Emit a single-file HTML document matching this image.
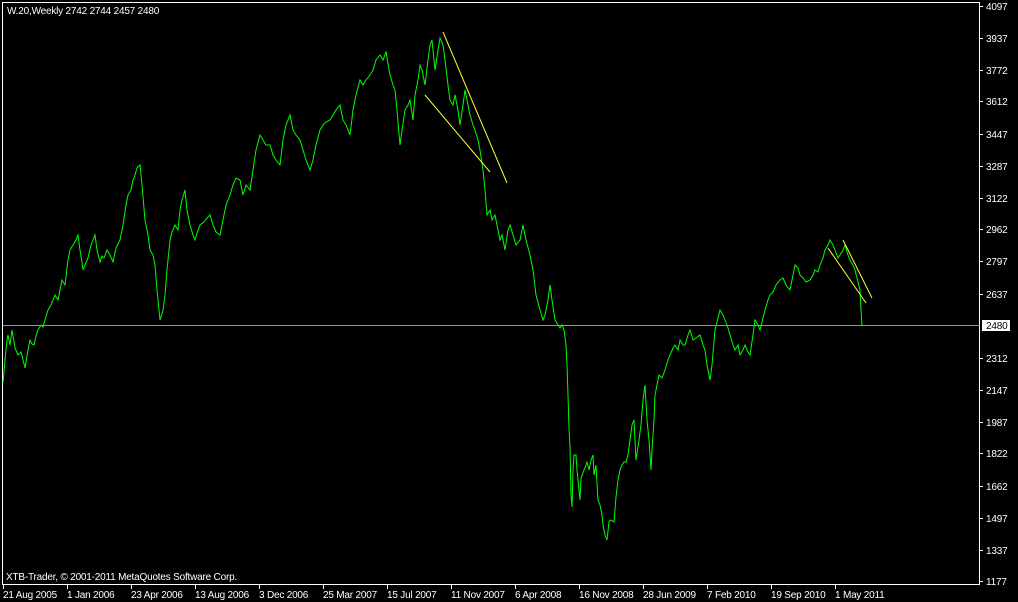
<!DOCTYPE html>
<html><head><meta charset="utf-8"><style>
html,body{margin:0;padding:0;background:#000;}
body{width:1018px;height:602px;overflow:hidden;position:relative;font-family:"Liberation Sans",sans-serif;font-size:11px;color:#fff;}
svg{position:absolute;left:0;top:0;}
svg text{font-family:"Liberation Sans",sans-serif;font-size:10px;letter-spacing:-0.2px;fill:#fff;}
</style></head><body>
<svg width="1018" height="602" viewBox="0 0 1018 602">
<rect x="2.5" y="2.5" width="977" height="582" fill="none" stroke="#fff" stroke-width="1"/>
<line x1="3" y1="325.5" x2="980" y2="325.5" stroke="#8a97a8" stroke-width="1"/>
<polyline fill="none" stroke="#00ff00" stroke-width="1" points="3,383 5,360 7,340 8,335 10,345 12,330 14,342 15,348 18,355 21,352 23,360 25,368 28,350 30,340 32,344 34,345 36,336 38,330 41,325 43,327 45,320 48,310 51,305 53,300 55,295 58,300 60,290 62,280 65,285 68,260 70,250 73,245 76,240 78,235 80,250 82,262 83,270 85,265 88,258 91,245 93,240 95,235 97,250 100,262 102,256 104,258 107,250 110,255 113,262 116,248 118,244 120,240 123,225 126,205 128,195 131,190 133,180 135,175 137,168 140,165 142,185 145,220 148,235 150,250 153,255 155,265 157,290 160,320 163,310 165,295 167,270 170,240 172,232 175,225 178,230 180,210 182,200 185,190 187,210 190,225 193,235 195,240 198,230 200,225 204,222 207,218 210,215 213,225 216,232 220,235 223,220 226,205 230,195 233,185 236,178 240,180 243,195 246,185 250,190 253,170 256,150 260,135 263,140 266,145 270,145 273,155 276,160 280,165 283,140 286,125 290,115 293,130 296,135 300,140 303,150 306,160 310,170 313,160 316,145 320,130 323,125 326,122 330,120 333,115 336,110 340,105 343,120 346,125 350,135 353,110 356,95 360,80 363,85 366,80 370,75 373,70 376,60 380,55 383,60 386,52 390,75 393,85 395,90 397,110 400,145 402,130 405,110 408,105 410,100 413,120 415,95 418,80 420,65 422,70 425,85 428,60 430,45 432,40 435,70 438,50 440,38 443,45 445,60 448,85 450,100 453,105 455,95 458,110 460,125 463,105 465,90 468,105 470,115 473,125 475,130 478,140 480,150 483,170 485,190 487,215 490,210 492,220 495,215 498,230 500,240 502,235 505,250 508,230 510,225 513,235 516,245 520,240 523,225 526,240 530,255 533,270 536,295 540,310 543,320 545,315 548,300 550,285 552,300 555,320 558,325 560,328 562,325 564,330 566,345 567,365 568,395 569,428 570,448 571,495 572,507 573,470 574,455 576,455 577,470 578,480 580,500 581,478 584,470 586,465 587,462 589,470 591,460 593,455 594,475 596,465 598,500 600,505 602,515 603,525 605,535 607,540 609,522 611,520 614,522 616,497 618,480 620,470 622,465 624,462 626,462 628,455 630,440 632,425 634,420 636,460 639,440 641,425 643,400 645,385 647,420 649,440 651,470 652,450 654,420 655,395 657,385 659,375 662,378 665,370 668,360 670,355 673,348 675,345 678,350 680,340 683,345 685,345 688,335 690,330 693,340 696,338 700,335 703,345 705,350 707,365 710,380 712,365 715,330 718,318 720,310 723,315 725,320 728,328 730,335 733,345 735,350 738,345 740,355 743,350 745,345 748,352 750,355 753,335 755,320 758,325 760,330 763,318 765,310 768,300 770,295 773,292 776,285 780,280 783,278 786,285 790,290 793,275 795,265 798,268 800,275 803,278 806,282 810,280 813,275 815,270 818,272 820,265 823,258 825,250 828,245 830,240 833,245 835,250 838,258 840,255 843,250 845,245 848,255 850,260 853,265 855,270 857,278 860,290 861,310 862,325"/>
<g stroke="#ffff33" stroke-width="1">
<line x1="443" y1="32" x2="507" y2="183"/>
<line x1="425" y1="95" x2="490" y2="172"/>
<line x1="843" y1="240" x2="872" y2="298"/>
<line x1="828" y1="248" x2="866" y2="303"/>
</g>
<g stroke="#fff" stroke-width="1">
<line x1="980" y1="6.5" x2="983" y2="6.5"/><line x1="980" y1="38.5" x2="983" y2="38.5"/><line x1="980" y1="70.5" x2="983" y2="70.5"/><line x1="980" y1="101.5" x2="983" y2="101.5"/><line x1="980" y1="134.5" x2="983" y2="134.5"/><line x1="980" y1="166.5" x2="983" y2="166.5"/><line x1="980" y1="198.5" x2="983" y2="198.5"/><line x1="980" y1="229.5" x2="983" y2="229.5"/><line x1="980" y1="261.5" x2="983" y2="261.5"/><line x1="980" y1="294.5" x2="983" y2="294.5"/><line x1="980" y1="358.5" x2="983" y2="358.5"/><line x1="980" y1="390.5" x2="983" y2="390.5"/><line x1="980" y1="422.5" x2="983" y2="422.5"/><line x1="980" y1="453.5" x2="983" y2="453.5"/><line x1="980" y1="486.5" x2="983" y2="486.5"/><line x1="980" y1="518.5" x2="983" y2="518.5"/><line x1="980" y1="550.5" x2="983" y2="550.5"/><line x1="980" y1="581.5" x2="983" y2="581.5"/>
<line x1="3.5" y1="585" x2="3.5" y2="589"/><line x1="67.5" y1="585" x2="67.5" y2="589"/><line x1="131.5" y1="585" x2="131.5" y2="589"/><line x1="195.5" y1="585" x2="195.5" y2="589"/><line x1="259.5" y1="585" x2="259.5" y2="589"/><line x1="323.5" y1="585" x2="323.5" y2="589"/><line x1="387.5" y1="585" x2="387.5" y2="589"/><line x1="451.5" y1="585" x2="451.5" y2="589"/><line x1="515.5" y1="585" x2="515.5" y2="589"/><line x1="579.5" y1="585" x2="579.5" y2="589"/><line x1="643.5" y1="585" x2="643.5" y2="589"/><line x1="707.5" y1="585" x2="707.5" y2="589"/><line x1="771.5" y1="585" x2="771.5" y2="589"/><line x1="835.5" y1="585" x2="835.5" y2="589"/>
</g>
<g>
<text x="986" y="10">4097</text><text x="986" y="42">3937</text><text x="986" y="74">3772</text><text x="986" y="105">3612</text><text x="986" y="138">3447</text><text x="986" y="170">3287</text><text x="986" y="202">3122</text><text x="986" y="233">2962</text><text x="986" y="265">2797</text><text x="986" y="298">2637</text>
<rect x="982" y="320" width="28" height="11" fill="#fff"/><text x="986" y="329" style="fill:#000">2480</text>
<text x="986" y="362">2312</text><text x="986" y="394">2147</text><text x="986" y="426">1987</text><text x="986" y="457">1822</text><text x="986" y="490">1662</text><text x="986" y="522">1497</text><text x="986" y="554">1337</text><text x="986" y="585">1177</text>
</g>
<g>
<text x="3" y="598">21 Aug 2005</text><text x="67" y="598">1 Jan 2006</text><text x="131" y="598">23 Apr 2006</text><text x="195" y="598">13 Aug 2006</text><text x="259" y="598">3 Dec 2006</text><text x="323" y="598">25 Mar 2007</text><text x="387" y="598">15 Jul 2007</text><text x="451" y="598">11 Nov 2007</text><text x="515" y="598">6 Apr 2008</text><text x="579" y="598">16 Nov 2008</text><text x="643" y="598">28 Jun 2009</text><text x="707" y="598">7 Feb 2010</text><text x="771" y="598">19 Sep 2010</text><text x="835" y="598">1 May 2011</text>
</g>
<text x="7" y="14">W.20,Weekly  2742 2744 2457 2480</text>
<text x="6" y="580">XTB-Trader, © 2001-2011 MetaQuotes Software Corp.</text>
</svg>
</body></html>
